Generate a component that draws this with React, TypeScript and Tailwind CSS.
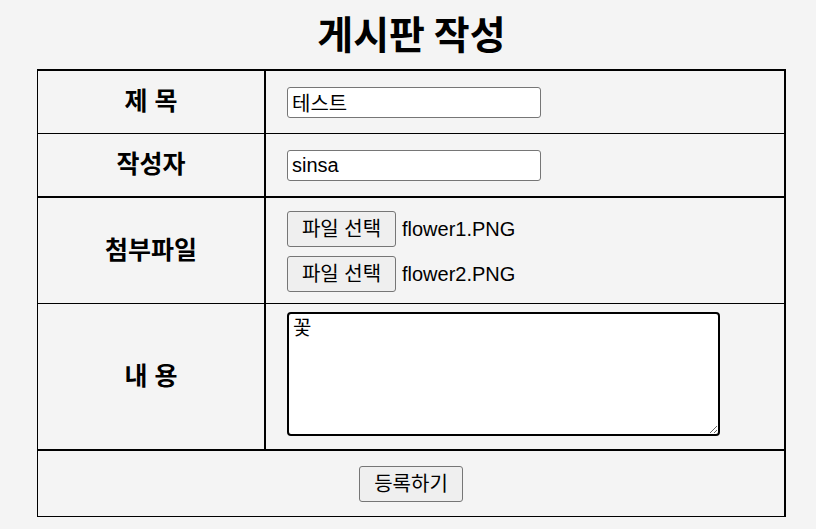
import { useState } from 'react';

const font = "font-['Liberation_Sans','Noto_Sans_CJK_KR',sans-serif]";

function LabelCell({ children }: { children: React.ReactNode }) {
    return (
        <div className="flex items-center justify-center border-r-2 border-black text-[25px] font-bold text-black">
            {children}
        </div>
    );
}

function FileRow({ name }: { name: string }) {
    return (
        <div className="flex items-center gap-[6px]">
            <button className="h-[36px] w-[109px] rounded-[3px] border border-[#767676] bg-[#efefef] text-[20px] text-black">
                파일 선택
            </button>
            <span className="text-[20px] text-black">{name}</span>
        </div>
    );
}

export default function App() {
    const [title, setTitle] = useState('테스트');
    const [writer, setWriter] = useState('sinsa');
    const [content, setContent] = useState('꽃');

    return (
        <div className={`${font} min-h-[529px] w-[816px] bg-[#f4f4f4]`}>
            <h1 className="flex h-[69px] items-center justify-center pb-[5px] pl-[7px] font-['Noto_Sans_CJK_KR',sans-serif] text-[39px] font-bold text-black">
                게시판 작성
            </h1>

            <div className="ml-[37px] w-[749px] border-t-2 border-r-2 border-b border-l border-black">
                {/* 제목 */}
                <div className="grid h-[63px] grid-cols-[228px_1fr] border-b border-black">
                    <LabelCell>제 목</LabelCell>
                    <div className="flex items-center pl-[21px]">
                        <input
                            value={title}
                            onChange={(e) => setTitle(e.target.value)}
                            className="h-[31px] w-[254px] rounded-[3px] border border-[#767676] bg-white px-[4px] text-[20px] text-black outline-none"
                        />
                    </div>
                </div>

                {/* 작성자 */}
                <div className="grid h-[64px] grid-cols-[228px_1fr] border-b-2 border-black">
                    <LabelCell>작성자</LabelCell>
                    <div className="flex items-center pl-[21px]">
                        <input
                            value={writer}
                            onChange={(e) => setWriter(e.target.value)}
                            className="h-[31px] w-[254px] rounded-[3px] border border-[#767676] bg-white px-[4px] text-[20px] text-black outline-none"
                        />
                    </div>
                </div>

                {/* 첨부파일 */}
                <div className="grid h-[106px] grid-cols-[228px_1fr] border-b border-black">
                    <LabelCell>첨부파일</LabelCell>
                    <div className="flex flex-col justify-center gap-[9px] pl-[21px] pt-[1px]">
                        <FileRow name="flower1.PNG" />
                        <FileRow name="flower2.PNG" />
                    </div>
                </div>

                {/* 내용 */}
                <div className="grid h-[147px] grid-cols-[228px_1fr] border-b-2 border-black">
                    <LabelCell>내 용</LabelCell>
                    <div className="pt-[8px] pl-[21px]">
                        <textarea
                            value={content}
                            onChange={(e) => setContent(e.target.value)}
                            className="block h-[124px] w-[433px] rounded-[4px] border-2 border-black bg-white px-[4px] py-[2px] text-[20px] leading-[24px] text-black outline-none"
                        />
                    </div>
                </div>

                {/* 등록 */}
                <div className="flex h-[65px] items-center justify-center">
                    <button className="h-[36px] w-[104px] rounded-[3px] border border-[#767676] bg-[#efefef] text-[20px] text-black">
                        등록하기
                    </button>
                </div>
            </div>
        </div>
    );
}
